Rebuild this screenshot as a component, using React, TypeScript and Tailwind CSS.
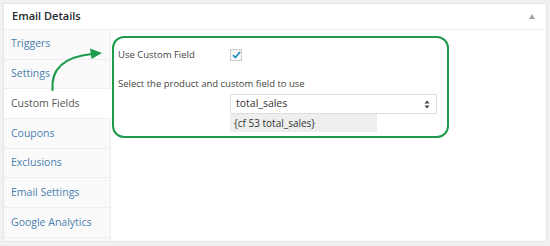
import React from "react";

const tabs = [
  "Triggers",
  "Settings",
  "Custom Fields",
  "Coupons",
  "Exclusions",
  "Email Settings",
  "Google Analytics",
];

export default function App() {
  return (
    <div
      className="w-[550px] h-[246px] bg-[#f1f1f1] p-[3px] relative"
      style={{ fontFamily: '"Open Sans", sans-serif' }}
    >
      <div className="h-[239px] bg-white border border-[#e5e5e5] flex flex-col">
        <div className="h-[26px] border-b border-[#eeeeee] flex items-center justify-between px-[8px] shrink-0">
          <span className="text-[11px] font-semibold text-[#23282d]">Email Details</span>
          <span className="w-0 h-0 border-l-[3px] border-r-[3px] border-b-[5px] border-l-transparent border-r-transparent border-b-[#a0a5aa] mr-[3px]" />
        </div>
        <div className="flex flex-1">
          <div className="w-[107px] bg-[#fafafa] border-r border-[#eeeeee] flex flex-col">
            {tabs.map((t) => {
              const active = t === "Custom Fields";
              return (
                <div
                  key={t}
                  className={
                    active
                      ? "h-[29.7px] flex items-center px-[7px] text-[10.5px] text-[#555555] bg-white border-b border-[#eeeeee] mr-[-1px]"
                      : "h-[29.7px] flex items-center px-[7px] text-[10.5px] text-[#4a7fb0] border-b border-[#eeeeee]"
                  }
                >
                  {t}
                </div>
              );
            })}
          </div>
          <div className="flex-1 pt-[6px] pl-[1px]">
            <div className="w-[337px] h-[102px] border-2 border-[#1d9b4b] rounded-[12px] pl-[4px] pt-[9px] text-[9.5px] text-[#444444]">
              <div className="flex items-center h-[16px]">
                <span className="w-[112px]">Use Custom Field</span>
                <span className="w-[12px] h-[12px] border border-[#cccccc] bg-white shadow-inner flex items-center justify-center">
                  <svg width="9" height="8" viewBox="0 0 9 8">
                    <path d="M1 4.2 L3.4 6.5 L8 1" fill="none" stroke="#1e8cbe" strokeWidth="1.8" />
                  </svg>
                </span>
              </div>
              <div className="mt-[15px] h-[12px] flex items-center">
                Select the product and custom field to use
              </div>
              <div className="ml-[112px] mt-[4px] w-[207px]">
                <div className="h-[20px] border border-[#dddddd] rounded-[2px] bg-white flex items-center justify-between pl-[5px] pr-[6px] text-[10.5px] text-[#333333]">
                  <span>total_sales</span>
                  <svg width="6" height="9" viewBox="0 0 6 9">
                    <path d="M0.5 3.5 L3 0.5 L5.5 3.5 Z M0.5 5.5 L3 8.5 L5.5 5.5 Z" fill="#444444" />
                  </svg>
                </div>
                <div className="w-[147px] h-[18px] bg-[#eeeeee] flex items-center pl-[4px] text-[10px] text-[#333333]">
                  {"{cf 53 total_sales}"}
                </div>
              </div>
            </div>
          </div>
        </div>
      </div>
      <svg
        className="absolute left-0 top-0 pointer-events-none"
        width="550"
        height="246"
        viewBox="0 0 550 246"
      >
        <path
          d="M52.5 90 C51 70 62 57 92 54"
          fill="none"
          stroke="#1d9b4b"
          strokeWidth="2.2"
          strokeLinecap="round"
        />
        <path d="M102 53 L90 48.5 L91.5 59 Z" fill="#1d9b4b" />
      </svg>
    </div>
  );
}
